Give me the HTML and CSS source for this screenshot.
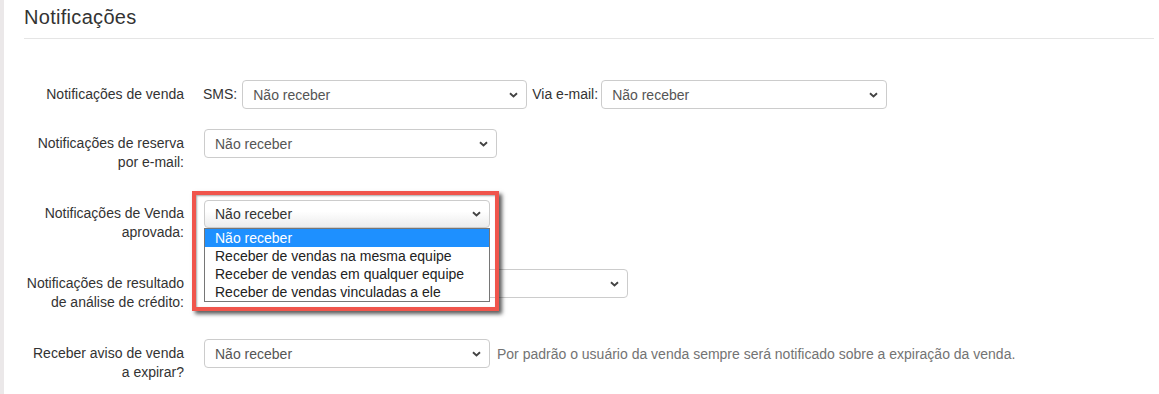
FILE: index.html
```html
<!DOCTYPE html>
<html lang="pt-BR">
<head>
    <meta charset="UTF-8">
    <meta name="viewport" content="width=device-width, initial-scale=1.0">
    <title>Notificações</title>
    <link rel="stylesheet" href="styles.css">
</head>
<body>
    <div class="page">
        <h1 class="page-title">Notificações</h1>

        <form class="form-horizontal">
            <div class="form-row first">
                <label class="control-label">Notificações de venda</label>
                <div class="controls">
                    <span class="inline-label sms-label">SMS:</span>
                    <select class="form-select sms">
                        <option>Não receber</option>
                    </select>
                    <span class="inline-label email-label">Via e-mail:</span>
                    <select class="form-select email">
                        <option>Não receber</option>
                    </select>
                </div>
            </div>

            <div class="form-row">
                <label class="control-label">Notificações de reserva por e-mail:</label>
                <div class="controls">
                    <select class="form-select medium">
                        <option>Não receber</option>
                    </select>
                </div>
            </div>

            <div class="form-row">
                <label class="control-label">Notificações de Venda aprovada:</label>
                <div class="controls">
                    <div class="dropdown-open">
                        <select class="form-select small focused">
                            <option>Não receber</option>
                        </select>
                        <ul class="dropdown-list">
                            <li class="selected">Não receber</li>
                            <li>Receber de vendas na mesma equipe</li>
                            <li>Receber de vendas em qualquer equipe</li>
                            <li>Receber de vendas vinculadas a ele</li>
                        </ul>
                        <div class="highlight-box"></div>
                    </div>
                </div>
            </div>

            <div class="form-row">
                <label class="control-label">Notificações de resultado de análise de crédito:</label>
                <div class="controls">
                    <select class="form-select wide">
                        <option>Não receber</option>
                    </select>
                </div>
            </div>

            <div class="form-row">
                <label class="control-label">Receber aviso de venda a expirar?</label>
                <div class="controls">
                    <select class="form-select small">
                        <option>Não receber</option>
                    </select>
                    <span class="help-text">Por padrão o usuário da venda sempre será notificado sobre a expiração da venda.</span>
                </div>
            </div>
        </form>
    </div>
</body>
</html>
```

FILE: styles.css
```css
body {
    margin: 0;
    font-family: "Liberation Sans", Arial, sans-serif;
    font-size: 14px;
    color: #333;
    background-color: #fff;
    border-left: 4px solid #ebe8e9;
    min-height: 394px;
    box-sizing: border-box;
}
.page {
    padding: 0 5px 0 20px;
}
.page-title {
    margin: 6px 0 0;
    padding-bottom: 10px;
    font-size: 20px;
    line-height: 22px;
    font-weight: normal;
    letter-spacing: 0.3px;
    border-bottom: 1px solid #e5e5e5;
}
.form-horizontal {
    margin-top: 41px;
}
.form-row {
    display: flex;
    align-items: flex-start;
    margin-bottom: 20px;
}
.form-row.first {
    margin-bottom: 18px;
}
.control-label {
    width: 160px;
    flex-shrink: 0;
    padding: 5px 20px 7px 0;
    text-align: right;
    line-height: 19px;
}
.controls {
    display: flex;
    align-items: center;
    gap: 6px;
    white-space: nowrap;
}
.inline-label {
    line-height: 19px;
}
.sms-label {
    margin-left: -1px;
    margin-right: -1px;
}
.email-label {
    margin-left: -1px;
}
.form-select {
    appearance: none;
    -webkit-appearance: none;
    box-sizing: border-box;
    height: 29px;
    margin: 0;
    padding: 0 24px 0 10px;
    font-family: inherit;
    font-size: 14px;
    color: #555;
    background-color: #fff;
    background-image: url("data:image/svg+xml,%3Csvg xmlns='http://www.w3.org/2000/svg' width='9' height='6' viewBox='0 0 9 6'%3E%3Cpath d='M1 1.2l3.5 3.3 3.5-3.3' fill='none' stroke='%23444' stroke-width='1.9'/%3E%3C/svg%3E");
    background-repeat: no-repeat;
    background-position: right 8px center;
    border: 1px solid #ccc;
    border-radius: 4px;
}
.form-select.sms { width: 285px; }
.form-select.email { width: 286px; margin-left: -3px; }
.form-select.medium { width: 293px; }
.form-select.small { width: 286px; }
.form-select.wide { width: 424px; }
.form-select.focused {
    height: 28px;
    background-color: #f4f4f4;
    background-image: url("data:image/svg+xml,%3Csvg xmlns='http://www.w3.org/2000/svg' width='9' height='6' viewBox='0 0 9 6'%3E%3Cpath d='M1 1.2l3.5 3.3 3.5-3.3' fill='none' stroke='%23444' stroke-width='1.9'/%3E%3C/svg%3E"),
        linear-gradient(#fff, #fff 40%, #ececec);
    background-repeat: no-repeat;
    background-position: right 8px center, 0 0;
    color: #333;
}
.help-text {
    margin-left: 1px;
    color: #737373;
}

/* open dropdown with the screenshot annotation */
.dropdown-open {
    position: relative;
    margin-top: 1px;
}
.dropdown-list {
    position: absolute;
    left: 0;
    top: 28px;
    z-index: 2;
    width: 286px;
    box-sizing: border-box;
    margin: 0;
    padding: 0;
    list-style: none;
    background: #fff;
    border: 1px solid #767676;
}
.dropdown-list li {
    height: 18px;
    line-height: 18px;
    padding-left: 10px;
    color: #222;
}
.dropdown-list li.selected {
    background-color: #1e90ff;
    color: #fff;
}
.highlight-box {
    position: absolute;
    left: -12px;
    top: -9px;
    z-index: 3;
    width: 307px;
    height: 120px;
    box-sizing: border-box;
    border: 4px solid #f0554c;
    box-shadow: 3px 3px 4px rgba(0, 0, 0, 0.65), inset 1px 1px 2px rgba(0, 0, 0, 0.35);
    pointer-events: none;
}
```
